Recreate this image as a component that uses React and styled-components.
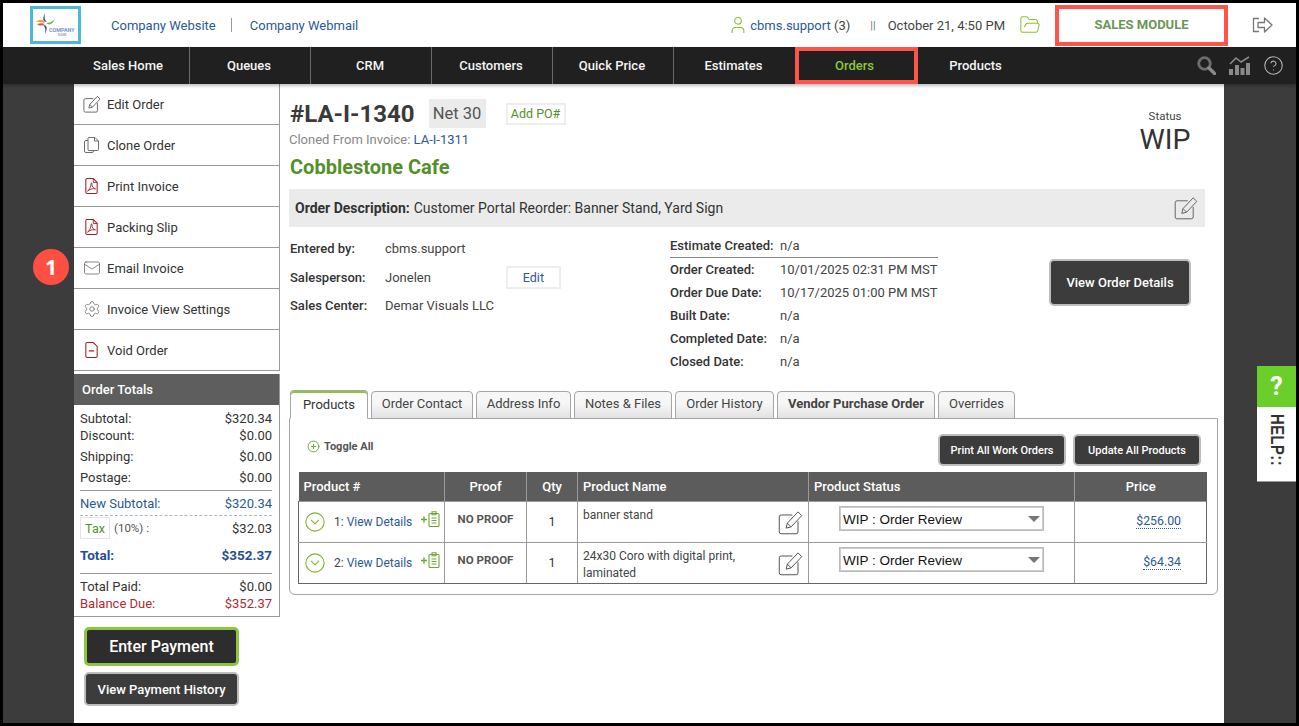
import React from 'react';
import styled, { createGlobalStyle } from 'styled-components';
import { CircleHelp, User, FolderOpen, Mail, Settings, CircleChevronDown, CirclePlus } from 'lucide-react';

const GlobalStyle = createGlobalStyle`
  html, body { margin: 0; padding: 0; background: #000; }
  body { font-family: Roboto, "Liberation Sans", sans-serif; color: #333; }
  * { box-sizing: border-box; }
`;

const Frame = styled.div`
  width: 1299px;
  height: 726px;
  border: 3px solid #000;
  display: flex;
  flex-direction: column;
  overflow: hidden;
  position: relative;
`;

/* header */
const Header = styled.header`
  height: 44px;
  background: #fff;
  display: flex;
  align-items: center;
  font-size: 13px;
`;
const LogoBox = styled.div`
  width: 51px;
  height: 38px;
  margin-left: 27px;
  border: 3px solid #4cb8d6;
  background: #fff;
  display: flex;
  align-items: center;
  justify-content: center;
`;
const HeadLink = styled.a`
  color: #2a5a96;
  text-decoration: none;
  white-space: nowrap;
  margin-left: ${p => p.$ml || 0}px;
`;
const Divider = styled.span`
  width: 1px;
  height: 14px;
  background: #999;
  margin: 0 18px 0 15px;
`;
const UserBlock = styled.div`
  margin-left: auto;
  display: flex;
  align-items: center;
  gap: 2px;
  color: #444;
  white-space: nowrap;
`;
const Pipes = styled.span`
  color: #777;
  margin: 0 12px 0 20px;
  font-size: 11px;
`;
const DateText = styled.span`
  color: #444;
  white-space: nowrap;
`;
const FolderWrap = styled.span`
  display: flex;
  margin: 0 14px 0 14px;
  color: #8cc02c;
`;
const ModuleBox = styled.div`
  width: 173px;
  height: 41px;
  border: 4px solid #ff5447;
  color: #6b9657;
  font-weight: 700;
  font-size: 13px;
  padding-bottom: 2px;
  display: flex;
  align-items: center;
  justify-content: center;
`;
const ExitWrap = styled.span`
  display: flex;
  margin: 0 23px 0 24px;
  color: #777;
`;

/* nav */
const Nav = styled.nav`
  height: 37px;
  background: #202020;
  display: flex;
  padding-left: 66px;
  box-shadow: 0 2px 3px rgba(0, 0, 0, 0.25);
  position: relative;
  z-index: 2;
`;
const NavItem = styled.a`
  width: 121px;
  display: flex;
  align-items: center;
  justify-content: center;
  padding-right: 2px;
  font-size: 13px;
  font-weight: 500;
  color: ${p => (p.$active ? '#8cc63f' : '#f4f4f4')};
  border-right: ${p => (p.$line ? '1px solid #6a6a6a' : '0')};
  position: relative;
  ${p => p.$active && `
    &::after {
      content: '';
      position: absolute;
      inset: 0 -2px 0 0;
      border: 4px solid #ff5447;
    }
  `}
`;
const NavTools = styled.div`
  margin-left: auto;
  display: flex;
  align-items: center;
  gap: 13px;
  padding-right: 12px;
`;

/* body */
const Body = styled.div`
  flex: 1;
  display: flex;
  min-height: 0;
`;
const Gutter = styled.div`
  width: ${p => p.$w}px;
  background: #3c3c3c;
  position: relative;
`;
const Badge = styled.div`
  position: absolute;
  left: 30px;
  top: 165px;
  width: 36px;
  height: 36px;
  border-radius: 50%;
  background: #ff4f42;
  color: #fff;
  font-family: "Open Sans", Roboto, sans-serif;
  font-weight: 700;
  font-size: 21px;
  display: flex;
  align-items: center;
  justify-content: center;
`;
const HelpTab = styled.div`
  position: absolute;
  right: 0;
  top: 282px;
  width: 39px;
  height: 116px;
  background: #fff;
  border-bottom: 1px solid #999;
`;
const HelpMark = styled.div`
  height: 41px;
  background: #6bcf2b;
  color: #fff;
  font-weight: 700;
  font-size: 25px;
  display: flex;
  align-items: center;
  justify-content: center;
`;
const HelpLabel = styled.div`
  writing-mode: vertical-rl;
  font-family: "Liberation Sans", Arial, sans-serif;
  font-weight: 700;
  font-size: 18px;
  letter-spacing: 0.6px;
  color: #333;
  margin: 7px 0 0 9px;
  transform: scaleY(0.82);
  transform-origin: top;
`;
const Sheet = styled.main`
  flex: 1;
  background: #fff;
  display: flex;
  min-width: 0;
`;

/* left column */
const SideCol = styled.aside`
  width: 206px;
  flex: none;
`;
const SideMenu = styled.div`
  border-right: 1px solid #999;
`;
const SideItem = styled.a`
  height: 41px;
  display: flex;
  align-items: center;
  gap: 6px;
  padding-left: 8px;
  font-size: 13px;
  color: #333;
  border-bottom: 1px solid #999;
`;
const IconSlot = styled.span`
  width: 19px;
  display: flex;
  justify-content: center;
  color: #6e6e6e;
`;
const TotalsBox = styled.section`
  margin-top: 3px;
  border-right: 1px solid #999;
  border-bottom: 1px solid #999;
  height: 243px;
`;
const TotalsHead = styled.div`
  height: 31px;
  background: #5e5e5e;
  color: #fff;
  font-size: 13px;
  font-weight: 500;
  display: flex;
  align-items: center;
  padding: 0 0 1px 8px;
`;
const TotalsBody = styled.div`
  padding: 5px 7px 0 6px;
`;
const TotalRow = styled.div`
  height: ${p => p.$h || 17}px;
  margin-top: ${p => p.$mt || 0}px;
  display: flex;
  align-items: center;
  justify-content: space-between;
  font-size: ${p => p.$size || 13}px;
  font-weight: ${p => p.$bold ? 700 : 400};
  color: ${p => p.$color || '#333'};
`;
const Rule = styled.div`
  border-top: 1px ${p => p.$dashed ? 'dashed #a9b8d0' : 'solid #999'};
  margin-top: ${p => p.$mt || 0}px;
`;
const TaxLabel = styled.span`
  display: flex;
  align-items: center;
  gap: 4px;
  font-size: 11.5px;
  color: #555;
`;
const TaxTag = styled.span`
  width: 30px;
  height: 22px;
  border: 1px solid #e5e5e5;
  color: #53902a;
  font-size: 12.5px;
  display: flex;
  align-items: center;
  justify-content: center;
`;
const PayActions = styled.div`
  padding: 10px 0 0 10px;
  display: flex;
  flex-direction: column;
  gap: 6px;
`;
const DarkButton = styled.button`
  width: ${p => p.$w}px;
  height: ${p => p.$h}px;
  background: ${p => p.$bg || '#3c3c3c'};
  color: #fff;
  border: ${p => p.$bw || 2}px solid ${p => p.$edge || '#bdbdbd'};
  border-radius: 5px;
  font-family: inherit;
  font-size: ${p => p.$size || 13}px;
  font-weight: 500;
  padding: 0;
  cursor: pointer;
`;

/* order column */
const OrderCol = styled.div`
  flex: 1;
  min-width: 0;
  padding: 15px 6px 0 9px;
`;
const Summary = styled.div`
  width: 916px;
  display: flex;
  justify-content: space-between;
`;
const TitleRow = styled.div`
  height: 29px;
  display: flex;
  align-items: center;
  padding-left: 1px;
`;
const OrderNo = styled.h1`
  margin: 0;
  font-size: 24px;
  font-weight: 700;
  color: #3a3a3a;
`;
const Terms = styled.span`
  margin-left: 14px;
  width: 57px;
  height: 29px;
  background: #ebebeb;
  color: #555;
  font-size: 16.5px;
  display: flex;
  align-items: center;
  justify-content: center;
`;
const GhostBtn = styled.a`
  width: ${p => p.$w}px;
  height: ${p => p.$h}px;
  margin-left: ${p => p.$ml || 0}px;
  border: 2px solid #eee;
  color: ${p => p.$color};
  font-size: ${p => p.$size || 12.5}px;
  display: flex;
  align-items: center;
  justify-content: center;
`;
const Cloned = styled.div`
  margin-top: 4px;
  font-size: 13px;
  color: #888;
  height: 16px;
  line-height: 16px;
`;
const BlueLink = styled.a`
  color: #2a5a96;
`;
const Customer = styled.h2`
  margin: 6px 0 0 1px;
  font-size: 20px;
  line-height: 26px;
  font-weight: 700;
  color: #53902a;
`;
const StatusBlock = styled.div`
  width: 80px;
  text-align: center;
  padding-top: 10px;
`;
const StatusLabel = styled.div`
  font-size: 11.5px;
  line-height: 14px;
  color: #444;
`;
const StatusValue = styled.div`
  font-size: 28.5px;
  line-height: 34px;
  color: #333;
`;
const DescBar = styled.div`
  width: 916px;
  height: 38px;
  margin-top: 9px;
  background: #ebebeb;
  display: flex;
  align-items: center;
  padding: 0 7px 0 6px;
  font-size: 14px;
`;
const DescLabel = styled.strong`
  font-weight: 700;
  margin-right: 4px;
`;
const DescEdit = styled.span`
  margin-left: auto;
  display: flex;
  color: #666;
`;
const Details = styled.div`
  display: grid;
  grid-template-columns: 380px 379px 142px;
  margin: 7px 0 17px 1px;
`;
const PersonRow = styled.div`
  height: ${p => p.$h}px;
  display: flex;
  align-items: center;
  font-size: 13px;
`;
const Label = styled.span`
  width: ${p => p.$w}px;
  flex: none;
  font-weight: 500;
  color: #333;
  font-size: 13px;
`;
const Value = styled.span`
  color: #444;
  white-space: nowrap;
`;
const DateRow = styled.div`
  width: 268px;
  height: 23px;
  display: flex;
  align-items: center;
  font-size: 13px;
  ${p => p.$ruled && 'height: 24px; border-bottom: 1px solid #888;'}
`;
const DetailAction = styled.div`
  padding-top: 25px;
`;
const Tabs = styled.div`
  display: flex;
  align-items: flex-end;
  gap: 3px;
  height: 29px;
  margin-left: 1px;
  position: relative;
  z-index: 1;
`;
const Tab = styled.a`
  height: ${p => (p.$active ? 29 : 28)}px;
  width: ${p => p.$w}px;
  display: flex;
  align-items: center;
  justify-content: center;
  padding-bottom: 4px;
  font-size: 13px;
  font-weight: ${p => (p.$bold ? 700 : 400)};
  color: #444;
  border: 1px solid #a5a5a5;
  border-radius: 4px 4px 0 0;
  background: ${p => (p.$active ? '#fff' : 'linear-gradient(#f6f6f6 45%, #e2e2e2)')};
  ${p => p.$active && `
    padding-bottom: 0;
    border-bottom-color: #fff;
    box-shadow: inset 0 2px 0 #8cc63f;
    color: #333;
  `}
`;
const Panel = styled.section`
  width: 929px;
  height: 177px;
  margin-top: -1px;
  border: 1px solid #a5a5a5;
  border-radius: 0 0 6px 6px;
  padding: 0 10px 0 8px;
`;
const PanelBar = styled.div`
  height: 53px;
  display: flex;
  align-items: center;
  justify-content: space-between;
  padding: 3px 6px 0 9px;
`;
const ToggleAll = styled.a`
  display: flex;
  align-items: center;
  gap: 4px;
  font-size: 11px;
  font-weight: 700;
  color: #555;
  margin-top: -2px;
`;
const PanelActions = styled.div`
  display: flex;
  gap: 7px;
  margin-top: 6px;
`;
const Table = styled.table`
  width: 908px;
  border-collapse: collapse;
  table-layout: fixed;
  font-size: 12.5px;
`;
const Th = styled.th`
  height: 29px;
  background: #5c5c5c;
  color: #fff;
  font-size: 13px;
  font-weight: 500;
  padding: 0 5px;
  text-align: ${p => p.$align || 'center'};
  border-left: 1px solid #9a9a9a;
  &:first-child { border-left: 0; }
`;
const Td = styled.td`
  height: ${p => p.$h || 41}px;
  padding: 0;
  border: 1px solid #9a9a9a;
  border-bottom-color: ${p => p.$last ? '#666' : '#9a9a9a'};
  text-align: ${p => p.$align || 'left'};
  vertical-align: middle;
  &:first-child { border-left-color: #666; }
  &:last-child { border-right-color: #666; }
`;
const ProductCell = styled.div`
  display: flex;
  align-items: center;
  padding-left: 5px;
  color: #444;
`;
const ChevronWrap = styled.span`
  display: flex;
  color: #7fb52a;
  margin-right: 8px;
`;
const DetailsText = styled.span`
  margin-top: 1px;
  white-space: nowrap;
  font-size: 12px;
`;
const AddNote = styled.span`
  display: flex;
  margin: -5px 0 0 9px;
`;
const NoProof = styled.div`
  font-size: 11.5px;
  font-weight: 700;
  color: #555;
  text-align: center;
  margin-top: -6px;
`;
const NameCell = styled.div`
  height: 40px;
  display: flex;
  justify-content: space-between;
  padding: 5px 5px 0 5px;
  font-size: 12px;
  line-height: 17px;
  color: #444;
`;
const NoteIcon = styled.span`
  flex: none;
  display: flex;
  color: #555;
  margin-top: 3px;
`;
const StatusCell = styled.div`
  display: flex;
  justify-content: center;
  margin-top: -6px;
`;
const SelectWrap = styled.div`
  width: 205px;
  height: 25px;
  position: relative;
  &::after {
    content: '';
    position: absolute;
    right: 4px;
    top: 10px;
    border-left: 6px solid transparent;
    border-right: 6px solid transparent;
    border-top: 6px solid #777;
  }
`;
const StatusSelect = styled.select`
  width: 100%;
  height: 100%;
  appearance: none;
  border: 1px solid #bbb;
  outline: 1px solid #ccc;
  outline-offset: -2px;
  border-radius: 0;
  background: #fff;
  color: #111;
  font-family: "Liberation Sans", Arial, sans-serif;
  font-size: 13.5px;
  padding: 1px 0 0 3px;
`;
const PriceCell = styled.div`
  display: flex;
  justify-content: flex-end;
  padding-right: 25px;
`;
const PriceLink = styled.a`
  color: #2a5a96;
  border-bottom: 1px dotted #2a5a96;
  font-size: 12.3px;
  line-height: 14px;
`;

/* small drawn icons */
const Logo = () => (
  <svg width="45" height="32" viewBox="0 0 45 32">
    <path d="M12 4 C11 9 12 11 14 13 C10 13 9 10 12 4Z" fill="#3a4ea0" />
    <path d="M12 25 C13 20 12 18 10 16 C14 16 15 19 12 25Z" fill="#3a4ea0" />
    <path d="M3 13 C7 10 10 10 12 14 C9 13 6 13 3 13Z" fill="#f2a22c" />
    <path d="M4 15 C7 14 10 14 12 15 C9 17 6 17 4 15Z" fill="#e4553b" />
    <path d="M22 10 C19 13 16 14 13 14 C16 17 20 15 22 10Z" fill="#6dbb45" />
    <text x="16" y="23" fontSize="5.400" fontWeight="700" fill="#7d94c8" fontFamily="Roboto, sans-serif">COMPANY</text>
    <text x="25" y="27" fontSize="3" fontWeight="700" fill="#9aa8cc" fontFamily="Roboto, sans-serif">NAME</text>
  </svg>
);

const ExitIcon = () => (
  <svg width="21" height="18" viewBox="0 0 21 18" fill="none" stroke="currentColor" strokeWidth="1.3">
    <path d="M7 2.500H1.500v13H7" />
    <path d="M6 6.500h6.500V2L20 9l-7.500 7v-4.500H6z" strokeLinejoin="round" />
  </svg>
);

const SearchIcon = () => (
  <svg width="19" height="19" viewBox="0 0 19 19" fill="none" stroke="#6d6d6d">
    <circle cx="7.500" cy="7.500" r="5.800" strokeWidth="2.800" />
    <path d="M12 12l5.500 5.500" strokeWidth="3.400" strokeLinecap="round" stroke="#8a8a8a" />
  </svg>
);

const ChartIcon = () => (
  <svg width="21" height="19" viewBox="0 0 21 19" fill="none">
    <path d="M1 8 L7 2 L12 6 L20 1" stroke="#8a8a8a" strokeWidth="1.600" />
    <path d="M0 13h4v6H0zM6 9h4v10H6zM11.500 12h4v7h-4zM17 7h4v12h-4z" fill="#8a8a8a" />
  </svg>
);

const EditIcon = ({ size }) => (
  <svg width={size} height={size} viewBox="0 0 20 20" fill="none" stroke="currentColor" strokeWidth={20 / size}>
    <path d="M11.500 4H2.500A1.500 1.500 0 0 0 1 5.500v12A1.500 1.500 0 0 0 2.500 19h12a1.500 1.500 0 0 0 1.500-1.500V9" />
    <path d="M6.500 14.500l1-4L16 1.500l3 3-8.500 9z" strokeLinejoin="round" />
    <path d="M7.500 10.500l3 3" />
  </svg>
);

const CloneIcon = () => (
  <svg width="15" height="16" viewBox="0 0 15 16" fill="none" stroke="currentColor" strokeWidth="1">
    <rect x="0.500" y="3.500" width="9" height="12" rx="1.500" />
    <path d="M5 .5h6l3.500 3.500v8.500a1 1 0 0 1-1 1H5a1 1 0 0 1-1-1v-11a1 1 0 0 1 1-1z" fill="#fff" />
    <path d="M10.500 .5V4h4" />
  </svg>
);

const PdfIcon = () => (
  <svg width="13" height="16" viewBox="0 0 14 18" fill="none" stroke="#9b2226" strokeWidth="1.200">
    <path d="M1.600.6H9L13.400 5v11a1.400 1.400 0 0 1-1.400 1.400H2A1.400 1.400 0 0 1 .6 16V2A1.400 1.400 0 0 1 1.600.6z" />
    <path d="M9 .6V5h4.400" strokeWidth="1" />
    <path d="M2.500 14.800c2-1 4-5 4-8.500 0-1.500 1.200-1.200 1 .3-.3 3 2 5.500 4 5.600-2.500-.6-6.500.2-9 2.600z" strokeWidth="1" />
  </svg>
);

const VoidIcon = () => (
  <svg width="13" height="16" viewBox="0 0 14 18" fill="none" stroke="#9b2226" strokeWidth="1.200">
    <path d="M1.600.6H9L13.400 5v11a1.400 1.400 0 0 1-1.400 1.400H2A1.400 1.400 0 0 1 .6 16V2A1.400 1.400 0 0 1 1.600.6z" />
    <path d="M4 10h6" strokeWidth="1.400" />
  </svg>
);

const AddNoteIcon = () => (
  <svg width="19" height="16" viewBox="0 0 19 16" fill="none" stroke="#6ea832" strokeWidth="1.100">
    <path d="M0 8.500h6M3 5.500v6" strokeWidth="1.400" />
    <rect x="8" y="2.500" width="10" height="13" rx="1" />
    <path d="M11 .8h4v3h-4zM10.500 7h5M10.500 9.500h5M10.500 12h5" />
  </svg>
);

const sideItems = [
  { label: 'Edit Order', icon: <EditIcon size={18} /> },
  { label: 'Clone Order', icon: <CloneIcon /> },
  { label: 'Print Invoice', icon: <PdfIcon /> },
  { label: 'Packing Slip', icon: <PdfIcon /> },
  { label: 'Email Invoice', icon: <Mail size={18} strokeWidth={1.1} /> },
  { label: 'Invoice View Settings', icon: <Settings size={18} strokeWidth={1.1} /> },
  { label: 'Void Order', icon: <VoidIcon /> },
];

const navItems = ['Sales Home', 'Queues', 'CRM', 'Customers', 'Quick Price', 'Estimates', 'Orders', 'Products'];

const tabs = [
  { label: 'Products', w: 78, active: true },
  { label: 'Order Contact', w: 102 },
  { label: 'Address Info', w: 95 },
  { label: 'Notes & Files', w: 98 },
  { label: 'Order History', w: 99 },
  { label: 'Vendor Purchase Order', w: 158, bold: true },
  { label: 'Overrides', w: 77 },
];

const dates = [
  ['Order Created:', '10/01/2025 02:31 PM MST'],
  ['Order Due Date:', '10/17/2025 01:00 PM MST'],
  ['Built Date:', 'n/a'],
  ['Completed Date:', 'n/a'],
  ['Closed Date:', 'n/a'],
];

const products = [
  { no: 1, name: 'banner stand', price: '$256.00' },
  { no: 2, name: '24x30 Coro with digital print, laminated', price: '$64.34' },
];

const App = () => (
  <Frame>
    <GlobalStyle />
    <Header>
      <LogoBox><Logo /></LogoBox>
      <HeadLink $ml={30}>Company Website</HeadLink>
      <Divider />
      <HeadLink>Company Webmail</HeadLink>
      <UserBlock>
        <User size={20} strokeWidth={1.3} color="#8cc02c" />
        <span><HeadLink>cbms.support</HeadLink> (3)</span>
      </UserBlock>
      <Pipes>||</Pipes>
      <DateText>October 21, 4:50 PM</DateText>
      <FolderWrap><FolderOpen size={22} strokeWidth={1.1} /></FolderWrap>
      <ModuleBox>SALES MODULE</ModuleBox>
      <ExitWrap><ExitIcon /></ExitWrap>
    </Header>
    <Nav>
      {navItems.map((item, i) => (
        <NavItem key={item} $active={item === 'Orders'} $line={i < 5}>{item}</NavItem>
      ))}
      <NavTools>
        <SearchIcon />
        <ChartIcon />
        <CircleHelp size={21} strokeWidth={1.2} color="#b5b5b5" />
      </NavTools>
    </Nav>
    <Body>
      <Gutter $w={71}><Badge>1</Badge></Gutter>
      <Sheet>
        <SideCol>
          <SideMenu>
            {sideItems.map((item) => (
              <SideItem key={item.label}>
                <IconSlot>{item.icon}</IconSlot>
                {item.label}
              </SideItem>
            ))}
          </SideMenu>
          <TotalsBox>
            <TotalsHead>Order Totals</TotalsHead>
            <TotalsBody>
              <TotalRow><span>Subtotal:</span><span>$320.34</span></TotalRow>
              <TotalRow><span>Discount:</span><span>$0.00</span></TotalRow>
              <TotalRow $mt={4}><span>Shipping:</span><span>$0.00</span></TotalRow>
              <TotalRow $mt={4}><span>Postage:</span><span>$0.00</span></TotalRow>
              <Rule $mt={4} />
              <TotalRow $h={24} $color="#2a5a96"><span>New Subtotal:</span><span>$320.34</span></TotalRow>
              <Rule $dashed />
              <TotalRow $h={24}>
                <TaxLabel><TaxTag>Tax</TaxTag>(10%) :</TaxLabel>
                <span>$32.03</span>
              </TotalRow>
              <TotalRow $h={24} $mt={3} $bold $size={13.5} $color="#24508f"><span>Total:</span><span>$352.37</span></TotalRow>
              <Rule $mt={6} />
              <TotalRow $mt={4}><span>Total Paid:</span><span>$0.00</span></TotalRow>
              <TotalRow $color="#b02a30"><span>Balance Due:</span><span>$352.37</span></TotalRow>
            </TotalsBody>
          </TotalsBox>
          <PayActions>
            <DarkButton $w={155} $h={39} $bg="#2d2d2d" $edge="#8cc63f" $bw={3} $size={16}>Enter Payment</DarkButton>
            <DarkButton $w={155} $h={34}>View Payment History</DarkButton>
          </PayActions>
        </SideCol>
        <OrderCol>
          <Summary>
            <div>
              <TitleRow>
                <OrderNo>#LA-I-1340</OrderNo>
                <Terms>Net 30</Terms>
                <GhostBtn $w={60} $h={22} $ml={20} $color="#53902a">Add PO#</GhostBtn>
              </TitleRow>
              <Cloned>Cloned From Invoice: <BlueLink>LA-I-1311</BlueLink></Cloned>
              <Customer>Cobblestone Cafe</Customer>
            </div>
            <StatusBlock>
              <StatusLabel>Status</StatusLabel>
              <StatusValue>WIP</StatusValue>
            </StatusBlock>
          </Summary>
          <DescBar>
            <DescLabel>Order Description:</DescLabel>
            Customer Portal Reorder: Banner Stand, Yard Sign
            <DescEdit><EditIcon size={24} /></DescEdit>
          </DescBar>
          <Details>
            <div>
              <PersonRow $h={28}><Label $w={95}>Entered by:</Label><Value>cbms.support</Value></PersonRow>
              <PersonRow $h={30}>
                <Label $w={95}>Salesperson:</Label><Value>Jonelen</Value>
                <GhostBtn $w={55} $h={23} $ml={75} $color="#2a5a96">Edit</GhostBtn>
              </PersonRow>
              <PersonRow $h={27}><Label $w={95}>Sales Center:</Label><Value>Demar Visuals LLC</Value></PersonRow>
            </div>
            <div>
              <DateRow $ruled><Label $w={110}>Estimate Created:</Label><Value>n/a</Value></DateRow>
              {dates.map(([label, value]) => (
                <DateRow key={label}><Label $w={110}>{label}</Label><Value>{value}</Value></DateRow>
              ))}
            </div>
            <DetailAction>
              <DarkButton $w={142} $h={47}>View Order Details</DarkButton>
            </DetailAction>
          </Details>
          <Tabs>
            {tabs.map((tab) => (
              <Tab key={tab.label} $w={tab.w} $active={tab.active} $bold={tab.bold}>{tab.label}</Tab>
            ))}
          </Tabs>
          <Panel>
            <PanelBar>
              <ToggleAll><CirclePlus size={13} strokeWidth={1.800} color="#6ea832" />Toggle All</ToggleAll>
              <PanelActions>
                <DarkButton $w={128} $h={32} $size={11}>Print All Work Orders</DarkButton>
                <DarkButton $w={128} $h={32} $size={11}>Update All Products</DarkButton>
              </PanelActions>
            </PanelBar>
            <Table>
              <colgroup>
                <col width="146" /><col width="82" /><col width="51" /><col width="231" /><col width="266" /><col width="132" />
              </colgroup>
              <thead>
                <tr>
                  <Th $align="left">Product #</Th>
                  <Th>Proof</Th>
                  <Th>Qty</Th>
                  <Th $align="left">Product Name</Th>
                  <Th $align="left">Product Status</Th>
                  <Th>Price</Th>
                </tr>
              </thead>
              <tbody>
                {products.map((product, i) => {
                  const last = i === products.length - 1;
                  return (
                    <tr key={product.no}>
                      <Td $last={last}>
                        <ProductCell>
                          <ChevronWrap><CircleChevronDown size={22} strokeWidth={1.2} /></ChevronWrap>
                          <DetailsText>{product.no}: <BlueLink>View Details</BlueLink></DetailsText>
                          <AddNote><AddNoteIcon /></AddNote>
                        </ProductCell>
                      </Td>
                      <Td $last={last}><NoProof>NO PROOF</NoProof></Td>
                      <Td $last={last} $align="center">{1}</Td>
                      <Td $last={last}>
                        <NameCell>
                          <span>{product.name}</span>
                          <NoteIcon><EditIcon size={25} /></NoteIcon>
                        </NameCell>
                      </Td>
                      <Td $last={last}>
                        <StatusCell>
                          <SelectWrap>
                            <StatusSelect defaultValue="WIP : Order Review">
                              <option>WIP : Order Review</option>
                            </StatusSelect>
                          </SelectWrap>
                        </StatusCell>
                      </Td>
                      <Td $last={last}>
                        <PriceCell><PriceLink>{product.price}</PriceLink></PriceCell>
                      </Td>
                    </tr>
                  );
                })}
              </tbody>
            </Table>
          </Panel>
        </OrderCol>
      </Sheet>
      <Gutter $w={72}>
        <HelpTab>
          <HelpMark>?</HelpMark>
          <HelpLabel>HELP::</HelpLabel>
        </HelpTab>
      </Gutter>
    </Body>
  </Frame>
);

export default App;
